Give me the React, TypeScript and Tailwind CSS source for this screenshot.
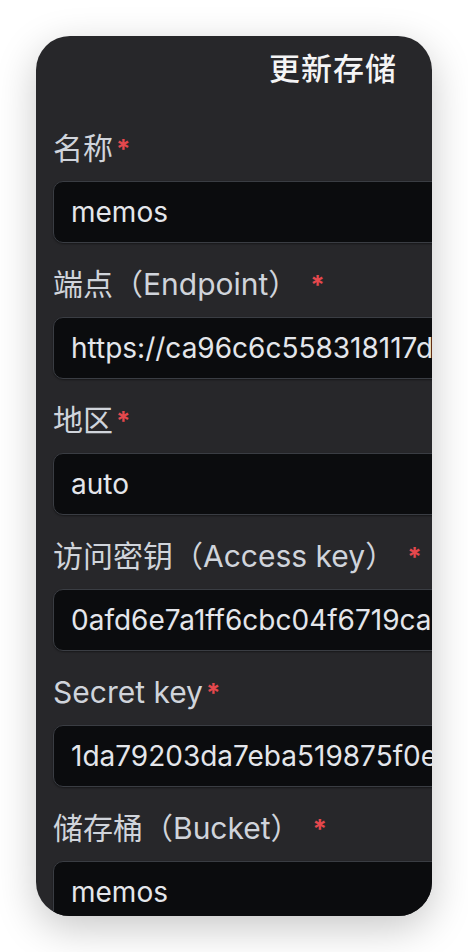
import React from 'react';

const fields = [
  { label: '名称', value: 'memos' },
  { label: '端点（Endpoint）', value: 'https://ca96c6c558318117d2b3c4e5f6a7b8c9.r2.cloudflarestorage.com' },
  { label: '地区', value: 'auto' },
  { label: '访问密钥（Access key）', value: '0afd6e7a1ff6cbc04f6719ca9e2b3d41' },
  { label: 'Secret key', value: '1da79203da7eba519875f0e3c2a1b4d5e6f7a8b9c0d1e2f3' },
  { label: '储存桶（Bucket）', value: 'memos' },
];

export default function App() {
  return (
    <div
      className="min-h-screen w-full bg-white pt-9 pl-9"
      style={{ fontFamily: 'Inter, "Noto Sans CJK SC", sans-serif' }}
    >
      <div className="w-[396px] h-[880px] overflow-hidden rounded-[34px] bg-[#27272a] shadow-[0_12px_40px_rgba(0,0,0,0.22)] pt-[13px] pl-[17px]">
        <div className="flex justify-end pr-[35px] h-10 items-center mb-[39px]">
          <h2 className="text-[31px] font-medium text-[#f4f4f5] tracking-[1px]">更新存储</h2>
        </div>
        <div className="flex flex-col gap-[21px]">
          {fields.map((f) => (
            <div key={f.label} className="flex flex-col">
              <label className="h-10 mb-[13px] flex items-center whitespace-nowrap text-[30px] text-[#d0d4db]">
                {f.label}
                <span
                  className={
                    f.label.endsWith('）')
                      ? 'ml-[12px] text-[26px] text-[#e5484d] font-bold'
                      : 'ml-[3px] text-[26px] text-[#e5484d] font-bold'
                  }
                >
                  *
                </span>
              </label>
              <div className="w-[640px] h-[62px] rounded-[10px] border border-[#3a3d43] bg-[#0b0c0e] flex items-center px-[17px] shadow-[0_1px_2px_rgba(0,0,0,0.4)]">
                <span className="whitespace-nowrap text-[28px] text-[#e4e6eb]">{f.value}</span>
              </div>
            </div>
          ))}
        </div>
      </div>
    </div>
  );
}
